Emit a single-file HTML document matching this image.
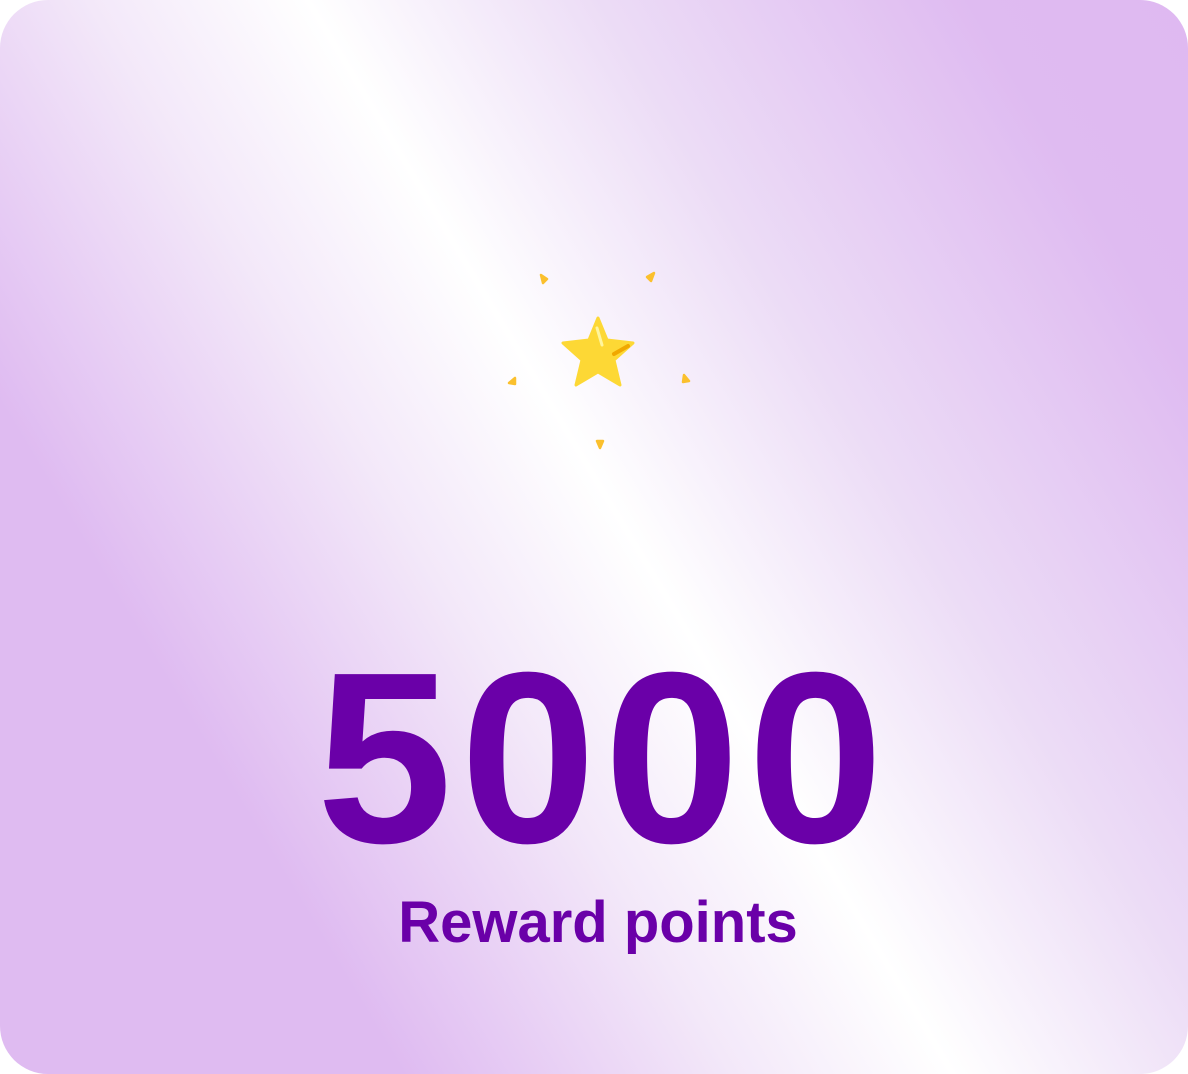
<!DOCTYPE html>
<html><head><style>
html,body{margin:0;padding:0;background:#fff;}
.card{position:relative;width:1188px;height:1074px;border-radius:48px;overflow:hidden;
background:linear-gradient(59deg,#dfbbf1 0%,#dfbbf1 22%,#f3e8f9 40%,#ffffff 52%,#ecdcf6 68%,#dfbbf1 88%,#dfb9f1 100%);
font-family:"Liberation Sans",sans-serif;color:#6a00a8;font-weight:bold;}
.num{position:absolute;left:10px;width:1188px;text-align:center;top:618px;font-size:244px;line-height:280px;letter-spacing:8px;}
.lbl{position:absolute;left:4px;width:1188px;text-align:center;top:888px;font-size:58px;line-height:70px;}
svg{position:absolute;left:0;top:0;}
</style></head><body>
<div class="card">
<svg width="1188" height="1074">
<path d="M598 318 L607 340 L633 343 L614 360 L620 385 L598 372 L576 385 L582 360 L563 343 L589 340 Z" fill="#fdd835" stroke="#fdd835" stroke-width="3" stroke-linejoin="round"/>
<path d="M597 328 L602 345" stroke="#fff59d" stroke-width="3" stroke-linecap="round"/>
<path d="M614 354 L628 346" stroke="#f0a800" stroke-width="4" stroke-linecap="round"/>
<g fill="#fbc02d" stroke="#fbc02d" stroke-width="2.5" stroke-linejoin="round">
<path d="M541 275 L547 279 L543 283 Z"/>
<path d="M654 273 L651 281 L647 277 Z"/>
<path d="M509 383 L515 378 L515 384 Z"/>
<path d="M684 375 L689 381 L683 382 Z"/>
<path d="M597 441 L603 441 L600 448 Z"/>
</g>
</svg>
<div class="num">5000</div>
<div class="lbl">Reward points</div>
</div>
</body></html>
